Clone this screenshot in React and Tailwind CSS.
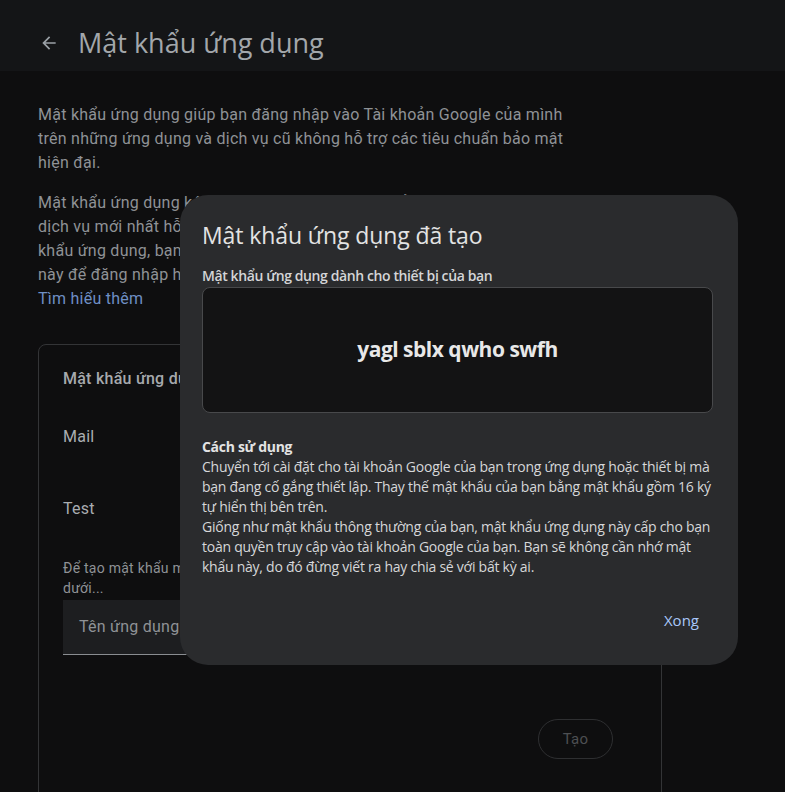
export default function App() {
  return (
    <div className="relative h-[792px] w-[785px] overflow-hidden bg-[#0e0e0f] font-['Roboto',sans-serif]">
      <header className="flex h-[71px] items-center bg-[#141517] pl-[39px] pt-[15px]">
        <svg width="20" height="20" viewBox="0 0 24 24" className="text-[#9aa0a6]">
          <path d="M20 11H7.83l5.59-5.59L12 4l-8 8 8 8 1.41-1.41L7.83 13H20v-2z" fill="currentColor" />
        </svg>
        <h1 className="ml-[19px] font-['Open_Sans',sans-serif] text-[27px] text-[#a3a7ab]">Mật khẩu ứng dụng</h1>
      </header>

      <main className="px-[38px] pt-[32px] text-[16px] leading-[24px] tracking-[0.25px] text-[#8f9296]">
        <p>
          Mật khẩu ứng dụng giúp bạn đăng nhập vào Tài khoản Google của mình
          <br />
          trên những ứng dụng và dịch vụ cũ không hỗ trợ các tiêu chuẩn bảo mật
          <br />
          hiện đại.
        </p>
        <p className="mt-[16px]">
          Mật khẩu ứng dụng kém an toàn hơn so với việc sử dụng các ứng dụng và
          <br />
          dịch vụ mới nhất hỗ trợ tiêu chuẩn bảo mật hiện đại. Trước khi tạo mật
          <br />
          khẩu ứng dụng, bạn nên kiểm tra xem ứng dụng của bạn có cần mật khẩu
          <br />
          này để đăng nhập hay không.
          <br />
          <span className="text-[#6e8fc4]">Tìm hiểu thêm</span>
        </p>

        <section className="mt-[33px] h-[460px] w-[624px] rounded-[8px] border border-[#333436] px-[24px] pt-[22px]">
          <h2 className="text-[16px] font-medium text-[#a6a9ad]">Mật khẩu ứng dụng của bạn</h2>
          <div className="mt-[34px] text-[#a9adb1]">Mail</div>
          <div className="mt-[48px] text-[#a9adb1]">Test</div>
          <p className="mt-[37px] text-[14px] leading-[20px] text-[#8f9296]">
            Để tạo mật khẩu mới cho ứng dụng, hãy nhập tên ứng dụng bên
            <br />
            dưới...
          </p>
          <div className="mt-[2px] flex h-[55px] w-[574px] items-center border-b border-[#8a8d91] bg-[#1d1e20] px-[16px] text-[#8f9296]">
            Tên ứng dụng
          </div>
          <div className="mt-[64px] flex justify-end pr-[24px]">
            <button className="h-[40px] w-[75px] rounded-full border border-[#2e2f31] text-[15px] text-[#4d4f52]">
              Tạo
            </button>
          </div>
        </section>
      </main>

      <div className="absolute left-[180px] top-[195px] h-[470px] w-[558px] rounded-[28px] bg-[#2a2b2d] pl-[22px] pr-[25px] pt-[24px] font-['Open_Sans',sans-serif] text-[#e3e3e3]">
        <h2 className="text-[23px] leading-[32px] tracking-[-0.1px]">Mật khẩu ứng dụng đã tạo</h2>
        <div className="mt-[16px] text-[14px] font-semibold leading-[18px] tracking-[-0.4px] text-[#d4d5d7]">
          Mật khẩu ứng dụng dành cho thiết bị của bạn
        </div>
        <div className="mt-[2px] flex h-[126px] w-[511px] items-center justify-center rounded-[8px] border border-[#48494b] bg-[#131314]">
          <span className="text-[21px] font-bold tracking-[-0.5px] text-[#e8e8e8]">yagl sblx qwho swfh</span>
        </div>
        <div className="mt-[24px] text-[14px] font-bold leading-[20px] tracking-[-0.3px] text-[#e3e3e3]">Cách sử dụng</div>
        <p className="whitespace-nowrap text-[14px] leading-[20px] tracking-[-0.25px] text-[#d6d7d9]">
          Chuyển tới cài đặt cho tài khoản Google của bạn trong ứng dụng hoặc thiết bị mà
          <br />
          bạn đang cố gắng thiết lập. Thay thế mật khẩu của bạn bằng mật khẩu gồm 16 ký
          <br />
          tự hiển thị bên trên.
          <br />
          Giống như mật khẩu thông thường của bạn, mật khẩu ứng dụng này cấp cho bạn
          <br />
          toàn quyền truy cập vào tài khoản Google của bạn. Bạn sẽ không cần nhớ mật
          <br />
          khẩu này, do đó đừng viết ra hay chia sẻ với bất kỳ ai.
        </p>
        <div className="mt-[32px] flex justify-end pr-[14px]">
          <button className="text-[15px] font-medium text-[#a8c7fa]">Xong</button>
        </div>
      </div>
    </div>
  );
}
